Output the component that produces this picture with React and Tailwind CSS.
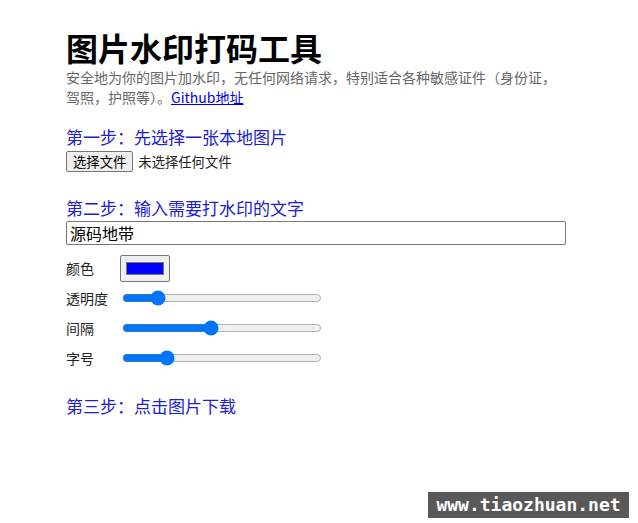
import React from "react";

const font = { fontFamily: '"Noto Sans CJK SC", "Noto Sans", sans-serif' };

function Slider({ label, value }) {
    return (
        <div className="flex items-center h-[30px]">
            <span className="w-[54px] text-[14px] text-[#222]">{label}</span>
            <input
                type="range"
                min="0"
                max="100"
                defaultValue={value}
                className="ml-[2px] w-[200px] accent-[#0075ff]"
            />
        </div>
    );
}

export default function App() {
    return (
        <div className="relative w-[638px] h-[523px] bg-white text-black" style={font}>
            <div className="w-[500px] ml-[66px] pt-[27px]">
                {/* Header */}
                <h1 className="text-[32px] leading-[40px] font-bold">图片水印打码工具</h1>
                <p className="text-[14px] leading-[20px] text-[#666]">
                    <span>安全地为你的图片加水印，无任何网络请求，特别适合各种敏感证件（身份证，</span>
                    <span className="flex">
                        <span>驾照，护照等）。</span>
                        <a href="#" className="text-[#0000ee] underline">Github地址</a>
                    </span>
                </p>

                {/* Step 1 */}
                <h3 className="mt-[18px] text-[17px] leading-[24px] text-[#2020d0]">第一步：先选择一张本地图片</h3>
                <div className="flex items-center h-[23px] mt-[1px]">
                    <button className="h-[21px] px-[6px] text-[13.33px] leading-[19px] bg-[#efefef] border border-[#767676] rounded-[2px] text-black">
                        选择文件
                    </button>
                    <span className="ml-[5px] text-[13.33px] text-[#222]">未选择任何文件</span>
                </div>

                {/* Step 2 */}
                <h3 className="mt-[23px] text-[17px] leading-[24px] text-[#2020d0]">第二步：输入需要打水印的文字</h3>
                <input
                    type="text"
                    defaultValue="源码地带"
                    className="mt-[1px] block w-[500px] h-[24px] px-[3px] text-[16px] border border-[#767676] rounded-[2px] outline-none"
                />

                <div className="flex items-center mt-[10px] h-[27px]">
                    <span className="w-[54px] text-[14px] text-[#222]">颜色</span>
                    <div className="w-[50px] h-[27px] px-[5px] py-[6px] bg-[#efefef] border border-[#767676] rounded-[2px]">
                        <div className="w-full h-full bg-[#0000ff] border border-[#777]" />
                    </div>
                </div>
                <div className="mt-[1px]">
                    <Slider label="透明度" value={15} />
                    <Slider label="间隔" value={44} />
                    <Slider label="字号" value={20} />
                </div>

                {/* Step 3 */}
                <h3 className="mt-[21px] text-[17px] leading-[24px] text-[#2020d0]">第三步：点击图片下载</h3>
            </div>

            {/* site watermark */}
            <div
                className="absolute left-[428px] top-[492px] w-[201px] h-[26px] bg-[#595959] text-white text-[18px] leading-[26px] text-center font-bold"
                style={{ fontFamily: '"DejaVu Sans Mono", "Liberation Mono", monospace' }}
            >
                www.tiaozhuan.net
            </div>
        </div>
    );
}
